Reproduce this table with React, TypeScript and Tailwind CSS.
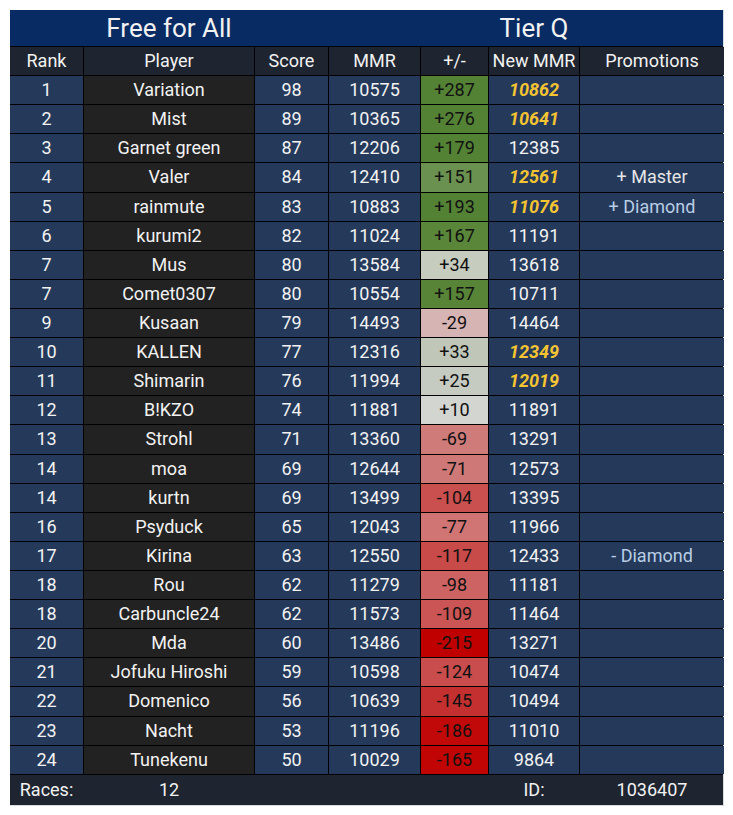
const COLS = "grid grid-cols-[73px_170px_73px_91px_67px_90px_144px] gap-x-px"

type Row = {
  rank: number
  player: string
  score: number
  mmr: number
  delta: string
  bg: string
  newMmr: number
  gold?: boolean
  promo?: string
  promoColor?: string
}

const rows: Row[] = [
  { rank: 1, player: "Variation", score: 98, mmr: 10575, delta: "+287", bg: "bg-[#548235]", newMmr: 10862, gold: true },
  { rank: 2, player: "Mist", score: 89, mmr: 10365, delta: "+276", bg: "bg-[#548235]", newMmr: 10641, gold: true },
  { rank: 3, player: "Garnet green", score: 87, mmr: 12206, delta: "+179", bg: "bg-[#548235]", newMmr: 12385 },
  { rank: 4, player: "Valer", score: 84, mmr: 12410, delta: "+151", bg: "bg-[#6a914f]", newMmr: 12561, gold: true, promo: "+ Master", promoColor: "text-[#e6e6e6]" },
  { rank: 5, player: "rainmute", score: 83, mmr: 10883, delta: "+193", bg: "bg-[#548235]", newMmr: 11076, gold: true, promo: "+ Diamond", promoColor: "text-[#b9cde5]" },
  { rank: 6, player: "kurumi2", score: 82, mmr: 11024, delta: "+167", bg: "bg-[#598639]", newMmr: 11191 },
  { rank: 7, player: "Mus", score: 80, mmr: 13584, delta: "+34", bg: "bg-[#c6ccbe]", newMmr: 13618 },
  { rank: 7, player: "Comet0307", score: 80, mmr: 10554, delta: "+157", bg: "bg-[#578437]", newMmr: 10711 },
  { rank: 9, player: "Kusaan", score: 79, mmr: 14493, delta: "-29", bg: "bg-[#d7b4b4]", newMmr: 14464 },
  { rank: 10, player: "KALLEN", score: 77, mmr: 12316, delta: "+33", bg: "bg-[#c0c7b8]", newMmr: 12349, gold: true },
  { rank: 11, player: "Shimarin", score: 76, mmr: 11994, delta: "+25", bg: "bg-[#c6cbc2]", newMmr: 12019, gold: true },
  { rank: 12, player: "B!KZO", score: 74, mmr: 11881, delta: "+10", bg: "bg-[#d3d5d0]", newMmr: 11891 },
  { rank: 13, player: "Strohl", score: 71, mmr: 13360, delta: "-69", bg: "bg-[#cf7b79]", newMmr: 13291 },
  { rank: 14, player: "moa", score: 69, mmr: 12644, delta: "-71", bg: "bg-[#ce7978]", newMmr: 12573 },
  { rank: 14, player: "kurtn", score: 69, mmr: 13499, delta: "-104", bg: "bg-[#c9504f]", newMmr: 13395 },
  { rank: 16, player: "Psyduck", score: 65, mmr: 12043, delta: "-77", bg: "bg-[#d07474]", newMmr: 11966 },
  { rank: 17, player: "Kirina", score: 63, mmr: 12550, delta: "-117", bg: "bg-[#c84a49]", newMmr: 12433, promo: "- Diamond", promoColor: "text-[#b9cde5]" },
  { rank: 18, player: "Rou", score: 62, mmr: 11279, delta: "-98", bg: "bg-[#ce6363]", newMmr: 11181 },
  { rank: 18, player: "Carbuncle24", score: 62, mmr: 11573, delta: "-109", bg: "bg-[#ca5554]", newMmr: 11464 },
  { rank: 20, player: "Mda", score: 60, mmr: 13486, delta: "-215", bg: "bg-[#c00000]", newMmr: 13271 },
  { rank: 21, player: "Jofuku Hiroshi", score: 59, mmr: 10598, delta: "-124", bg: "bg-[#c84d4c]", newMmr: 10474 },
  { rank: 22, player: "Domenico", score: 56, mmr: 10639, delta: "-145", bg: "bg-[#c43030]", newMmr: 10494 },
  { rank: 23, player: "Nacht", score: 53, mmr: 11196, delta: "-186", bg: "bg-[#c20909]", newMmr: 11010 },
  { rank: 24, player: "Tunekenu", score: 50, mmr: 10029, delta: "-165", bg: "bg-[#c10505]", newMmr: 9864 },
]

const cell = "flex h-[28.12px] items-center justify-center whitespace-nowrap"

export default function App() {
  return (
    <div className="p-[10px] font-['Roboto',sans-serif] text-[18px] leading-none text-[#f2f2f2]">
      <div className="w-[714px] border-r border-b border-[#d8dbe0]">
        <div className={`${COLS} h-[37px] border-b border-black bg-[#072b62] text-[26px]`}>
          <div />
          <div className="flex items-center justify-center whitespace-nowrap">Free for All</div>
          <div />
          <div />
          <div />
          <div className="flex items-center justify-center whitespace-nowrap">Tier Q</div>
          <div />
        </div>

        <div className="flex flex-col gap-y-px bg-black">
          <div className={`${COLS} bg-black`}>
            {["Rank", "Player", "Score", "MMR", "+/-", "New MMR", "Promotions"].map((h) => (
              <div key={h} className={`${cell} bg-[#1f2530]`}>
                {h}
              </div>
            ))}
          </div>
          {rows.map((r, i) => (
            <div key={i} className={`${COLS} bg-black`}>
              <div className={`${cell} bg-[#253a5b]`}>{r.rank}</div>
              <div className={`${cell} bg-[#222222]`}>{r.player}</div>
              <div className={`${cell} bg-[#253a5b]`}>{r.score}</div>
              <div className={`${cell} bg-[#253a5b]`}>{r.mmr}</div>
              <div className={`${cell} ${r.bg} text-[#111111]`}>{r.delta}</div>
              <div
                className={`${cell} bg-[#253a5b] ${r.gold ? "font-bold italic text-[#f4c431]" : ""}`}
              >
                {r.newMmr}
              </div>
              <div className={`${cell} bg-[#253a5b] ${r.promoColor ?? ""}`}>{r.promo}</div>
            </div>
          ))}
        </div>

        <div className={`${COLS} h-[31px] border-t border-black bg-[#1f2530]`}>
          <div className="flex items-center justify-center">Races:</div>
          <div className="flex items-center justify-center">12</div>
          <div />
          <div />
          <div />
          <div className="flex items-center justify-center">ID:</div>
          <div className="flex items-center justify-center">1036407</div>
        </div>
      </div>
    </div>
  )
}
